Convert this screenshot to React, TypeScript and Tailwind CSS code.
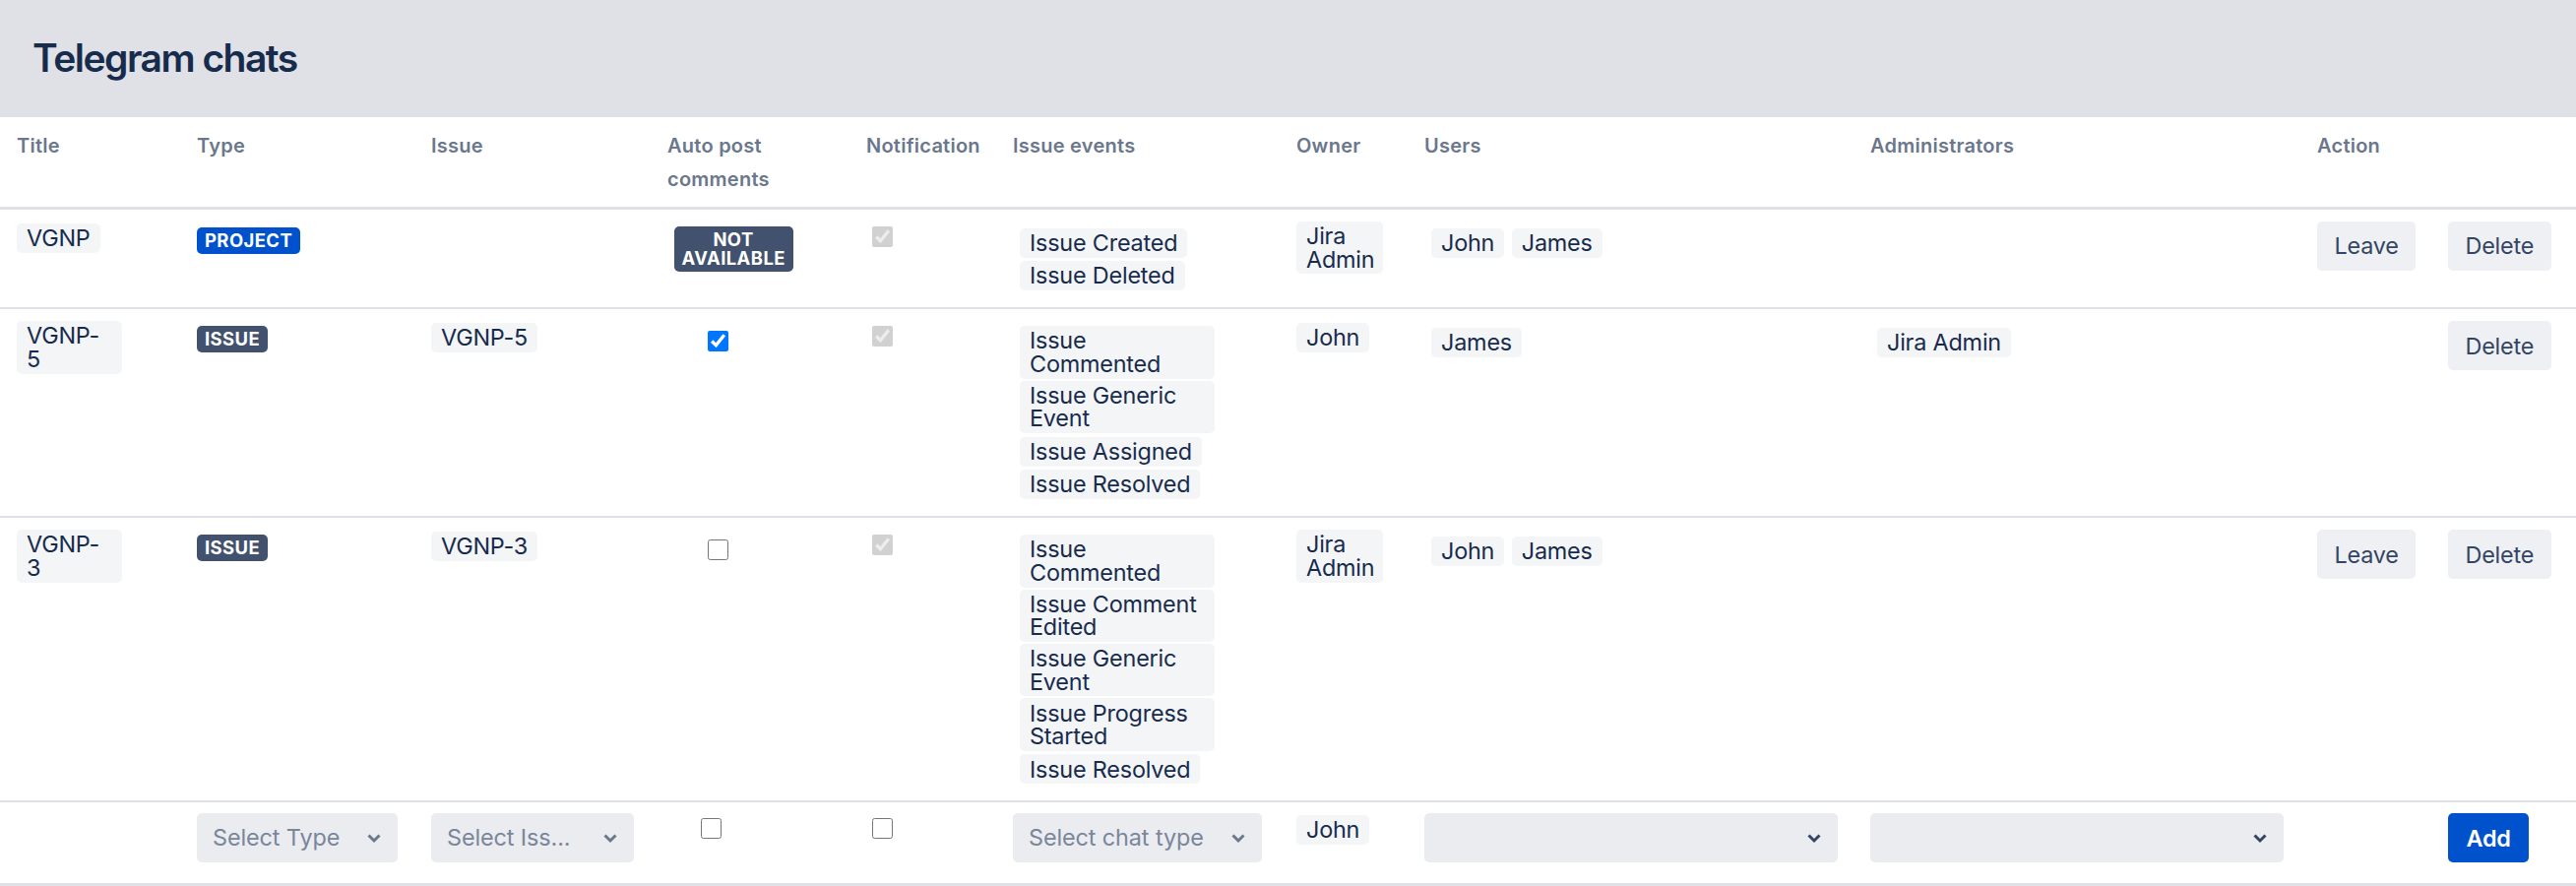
import type { ReactNode } from "react";
import clsx from "clsx";

function Tag({ children, className }: { children: ReactNode; className?: string }) {
  return (
    <span className={clsx("block w-fit rounded-[5px] bg-[#f4f5f7] px-[10px] py-[3.3px] leading-[23.4px] tracking-[-0.2px] text-[#172b4d]", className)}>
      {children}
    </span>
  );
}

function Badge({ children, blue, className }: { children: ReactNode; blue?: boolean; className?: string }) {
  return (
    <span
      className={clsx(
        "block w-fit rounded-[5px] px-[8px] py-[4px] text-[18.4px] font-bold leading-[19px] tracking-[0.45px] text-white uppercase",
        blue ? "bg-[#0052cc]" : "bg-[#42526e]",
        className,
      )}
    >
      {children}
    </span>
  );
}

function Events({ items }: { items: { label: string; double?: boolean }[] }) {
  return (
    <div className="pt-[3px]">
      {items.map((item) => (
        <Tag key={item.label} className={clsx("ml-[7px] max-w-[198px]", item.double ? "mt-[2px]" : "mt-[3.6px]")}>
          {item.label}
        </Tag>
      ))}
    </div>
  );
}

function Users({ names }: { names: string[] }) {
  return (
    <div className="flex gap-[7.5px] pl-[7px] pt-[6.5px]">
      {names.map((name) => (
        <Tag key={name}>{name}</Tag>
      ))}
    </div>
  );
}

function Btn({ children }: { children: ReactNode }) {
  return (
    <button className="h-[50px] rounded-[5px] bg-[#eff0f3] px-[17.5px] tracking-[-0.2px] text-[#344563]">{children}</button>
  );
}

function Select({ label, width, dark }: { label?: string; width: string; dark?: boolean }) {
  return (
    <div className={clsx("relative", width)}>
      <select className="h-[50px] w-full appearance-none rounded-[5px] bg-[#ebecf0] pb-[2px] pl-[16px] tracking-[-0.1px] text-[#7a869a]">
        <option>{label}</option>
      </select>
      <svg
        viewBox="0 0 16 11"
        className={clsx("pointer-events-none absolute right-[16px] top-[20px] h-[11px] w-[16px]", dark ? "text-[#344563]" : "text-[#6b778c]")}
      >
        <polyline points="2.5,2.5 8,8 13.5,2.5" fill="none" stroke="currentColor" strokeWidth="3" />
      </svg>
    </div>
  );
}

const cell = "px-[17px] pt-[12px] align-top border-b-2 border-[#dfe1e6]";
const head = "px-[17px] pt-[12px] pb-[11px] align-top text-left text-[20px] font-semibold leading-[34px] tracking-[0.25px] text-[#6b778c]";
const check = "block h-[21px] w-[21px]";

export default function App() {
  return (
    <div className="min-h-screen bg-white text-[23.4px] text-[#172b4d] [font-family:Inter,'Liberation_Sans',sans-serif]">
      <div className="flex h-[119px] items-center bg-[#dfe1e6] pl-[33px]">
        <h1 className="text-[39px] font-semibold tracking-[-1.5px] text-[#172b4d]">Telegram chats</h1>
      </div>
      <table className="w-full table-fixed border-collapse">
        <colgroup>
          <col className="w-[183px]" />
          <col className="w-[238px]" />
          <col className="w-[240px]" />
          <col className="w-[202px]" />
          <col className="w-[149px]" />
          <col className="w-[288px]" />
          <col className="w-[130px]" />
          <col className="w-[453px]" />
          <col className="w-[454px]" />
          <col className="w-[133px]" />
          <col className="w-[147px]" />
        </colgroup>
        <thead>
          <tr className="border-b-[3px] border-[#dfe1e6]">
            <th className={head}>Title</th>
            <th className={head}>Type</th>
            <th className={head}>Issue</th>
            <th className={head}>Auto post comments</th>
            <th className={clsx(head, "whitespace-nowrap")}>Notification</th>
            <th className={head}>Issue events</th>
            <th className={head}>Owner</th>
            <th className={head}>Users</th>
            <th className={head}>Administrators</th>
            <th className={head} colSpan={2}>Action</th>
          </tr>
        </thead>
        <tbody>
          <tr>
            <td className={cell}><Tag className="mt-[1.5px]">VGNP</Tag></td>
            <td className={cell}><Badge blue className="mt-[6px]">Project</Badge></td>
            <td className={cell} />
            <td className={cell}>
              <Badge className="ml-[6.5px] mt-[5px] max-w-[121px] text-center">Not available</Badge>
            </td>
            <td className={cell}><input type="checkbox" disabled defaultChecked className={clsx(check, "ml-[6px] mt-[5px]")} /></td>
            <td className={clsx(cell, "pb-[17px]")}>
              <Events items={[{ label: "Issue Created" }, { label: "Issue Deleted" }]} />
            </td>
            <td className={cell}><Tag className="max-w-[88px]">Jira Admin</Tag></td>
            <td className={cell}><Users names={["John", "James"]} /></td>
            <td className={cell} />
            <td className={cell}><Btn>Leave</Btn></td>
            <td className={cell}><Btn>Delete</Btn></td>
          </tr>
          <tr>
            <td className={cell}><Tag className="max-w-[107px]">VGNP-5</Tag></td>
            <td className={cell}><Badge className="mt-[5px]">Issue</Badge></td>
            <td className={cell}><Tag className="mt-[1.5px]">VGNP-5</Tag></td>
            <td className={cell}>
              <input type="checkbox" defaultChecked className={clsx(check, "ml-[41px] mt-[10px]")} />
            </td>
            <td className={cell}><input type="checkbox" disabled defaultChecked className={clsx(check, "ml-[6px] mt-[5px]")} /></td>
            <td className={clsx(cell, "pb-[17px]")}>
              <Events
                items={[
                  { label: "Issue Commented", double: true },
                  { label: "Issue Generic Event", double: true },
                  { label: "Issue Assigned" },
                  { label: "Issue Resolved" },
                ]}
              />
            </td>
            <td className={cell}><Tag className="mt-[1.5px]">John</Tag></td>
            <td className={cell}><Users names={["James"]} /></td>
            <td className={cell}><Users names={["Jira Admin"]} /></td>
            <td className={cell} />
            <td className={cell}><Btn>Delete</Btn></td>
          </tr>
          <tr>
            <td className={cell}><Tag className="max-w-[107px]">VGNP-3</Tag></td>
            <td className={cell}><Badge className="mt-[5px]">Issue</Badge></td>
            <td className={cell}><Tag className="mt-[1.5px]">VGNP-3</Tag></td>
            <td className={cell}>
              <input type="checkbox" className={clsx(check, "ml-[41px] mt-[10px]")} />
            </td>
            <td className={cell}><input type="checkbox" disabled defaultChecked className={clsx(check, "ml-[6px] mt-[5px]")} /></td>
            <td className={clsx(cell, "pb-[17px]")}>
              <Events
                items={[
                  { label: "Issue Commented", double: true },
                  { label: "Issue Comment Edited", double: true },
                  { label: "Issue Generic Event", double: true },
                  { label: "Issue Progress Started", double: true },
                  { label: "Issue Resolved" },
                ]}
              />
            </td>
            <td className={cell}><Tag className="max-w-[88px]">Jira Admin</Tag></td>
            <td className={cell}><Users names={["John", "James"]} /></td>
            <td className={cell} />
            <td className={cell}><Btn>Leave</Btn></td>
            <td className={cell}><Btn>Delete</Btn></td>
          </tr>
          <tr className="border-b-[3px] border-[#dfe1e6]">
            <td className="pb-[21px]" />
            <td className="px-[17px] pt-[11px] align-top"><Select label="Select Type" width="w-[204px]" /></td>
            <td className="px-[17px] pt-[11px] align-top"><Select label="Select Iss..." width="w-[206px]" /></td>
            <td className="px-[17px] pt-[16px] align-top"><input type="checkbox" className={clsx(check, "ml-[34px]")} /></td>
            <td className="px-[17px] pt-[16px] align-top"><input type="checkbox" className={clsx(check, "ml-[6px]")} /></td>
            <td className="px-[17px] pt-[11px] align-top"><Select label="Select chat type" width="w-[253px]" /></td>
            <td className="px-[17px] pt-[12.5px] align-top"><Tag>John</Tag></td>
            <td className="px-[17px] pt-[11px] align-top"><Select width="w-[420px]" dark /></td>
            <td className="px-[17px] pt-[11px] align-top"><Select width="w-[420px]" dark /></td>
            <td />
            <td className="px-[17px] pt-[11px] pb-[21px] align-top">
              <button className="h-[50px] rounded-[5px] bg-[#0052cc] px-[18.5px] font-semibold tracking-[-0.2px] text-white">Add</button>
            </td>
          </tr>
        </tbody>
      </table>
    </div>
  );
}
